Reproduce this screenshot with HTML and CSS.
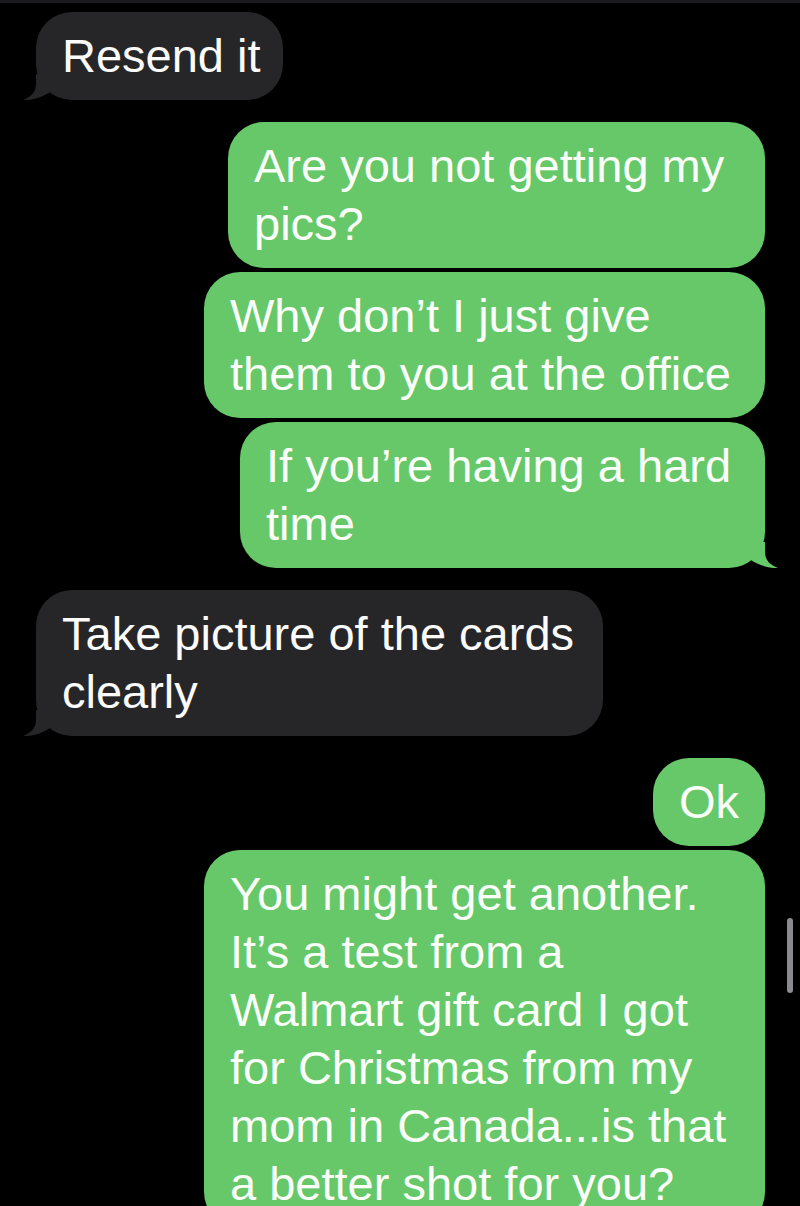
FILE: index.html
```html
<!DOCTYPE html>
<html lang="en">
<head>
<meta charset="utf-8">
<title>Messages</title>
<link rel="stylesheet" href="styles.css">
</head>
<body>
<div class="screen">
  <div class="topbar"></div>
  <div class="thread">
    <div class="row incoming">
      <div class="bubble grey w-resend">Resend it<svg class="tail tail-left" viewBox="0 0 34 26" width="34" height="26"><path d="M13 0 L13 10 C13 18 8 23 0 26 C9 26.5 20 23 28 17.5 L28 0 Z"/></svg></div>
    </div>

    <div class="row outgoing group-start">
      <div class="bubble green w-pics">Are you not getting my<br>pics?</div>
    </div>
    <div class="row outgoing">
      <div class="bubble green w-office">Why don’t I just give<br>them to you at the office</div>
    </div>
    <div class="row outgoing">
      <div class="bubble green w-hard">If you’re having a hard<br>time<svg class="tail tail-right" viewBox="0 0 34 26" width="34" height="26"><path d="M13 0 L13 10 C13 18 8 23 0 26 C9 26.5 20 23 28 17.5 L28 0 Z"/></svg></div>
    </div>

    <div class="row incoming group-start">
      <div class="bubble grey w-cards">Take picture of the cards<br>clearly<svg class="tail tail-left" viewBox="0 0 34 26" width="34" height="26"><path d="M13 0 L13 10 C13 18 8 23 0 26 C9 26.5 20 23 28 17.5 L28 0 Z"/></svg></div>
    </div>

    <div class="row outgoing group-start">
      <div class="bubble green w-ok">Ok</div>
    </div>
    <div class="row outgoing">
      <div class="bubble green w-long">You might get another.<br>It’s a test from a<br>Walmart gift card I got<br>for Christmas from my<br>mom in Canada...is that<br>a better shot for you?</div>
    </div>
  </div>
  <div class="scrollbar"></div>
</div>
</body>
</html>
```

FILE: styles.css
```css
* {
  box-sizing: border-box;
}

html, body {
  margin: 0;
  padding: 0;
  background: #000;
}

.screen {
  position: relative;
  width: 800px;
  height: 1206px;
  overflow: hidden;
  background: #000;
  font-family: "Liberation Sans", Arial, sans-serif;
}

.topbar {
  height: 3px;
  background: #1b1b1d;
}

.thread {
  display: flex;
  flex-direction: column;
  gap: 4px;
  padding: 9px 35px 0 36px;
}

.row {
  display: flex;
}

.row.incoming {
  justify-content: flex-start;
}

.row.outgoing {
  justify-content: flex-end;
}

.row.group-start {
  margin-top: 18px;
}

.bubble {
  position: relative;
  padding: 15px 0 15px 26px;
  border-radius: 36px;
  font-size: 47px;
  line-height: 58px;
  color: #fff;
  white-space: nowrap;
}

.bubble.grey {
  background: #262628;
  color: #fbfbfb;
}

.bubble.green {
  background: #66c869;
  color: #fafff9;
}

.grey .tail {
  fill: #262628;
}

.green .tail {
  fill: #66c869;
}

.tail {
  position: absolute;
  bottom: 0;
  display: block;
}

.tail-left {
  left: -13px;
}

.tail-right {
  right: -13px;
  transform: scaleX(-1);
}

.w-resend { width: 247px; }
.w-pics { width: 537px; }
.w-office { width: 561px; }
.w-hard { width: 525px; }
.w-cards { width: 567px; }
.w-ok { width: 112px; }
.w-long { width: 561px; }

.scrollbar {
  position: absolute;
  left: 787px;
  top: 918px;
  width: 6px;
  height: 75px;
  border-radius: 3px;
  background: #8b8b8f;
}
```
